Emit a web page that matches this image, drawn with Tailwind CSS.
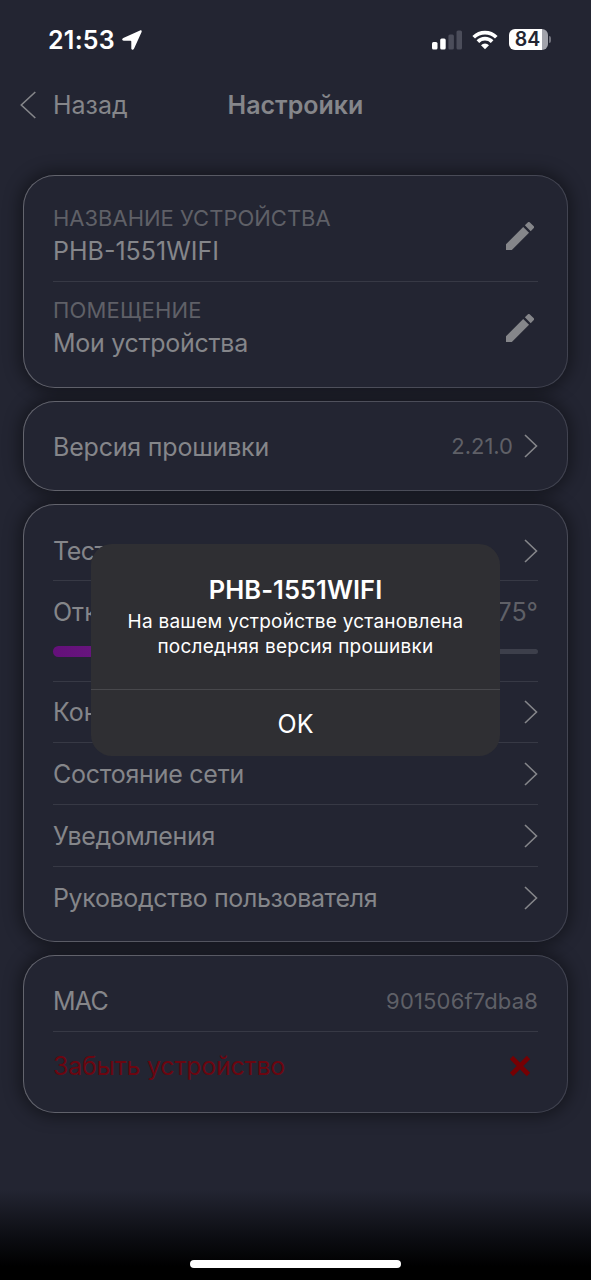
<!DOCTYPE html>
<html lang="ru">
<head>
<meta charset="utf-8">
<title>Настройки</title>
<script src="https://cdn.jsdelivr.net/npm/@tailwindcss/browser@4"></script>
</head>
<body class="bg-[#232532]">
<svg class="hidden">
  <symbol id="chev" viewBox="0 0 14 24"><path d="M1 1l11.500 11L1 23" fill="none" stroke="currentColor" stroke-width="1.600"/></symbol>
  <symbol id="pencil" viewBox="3 3 18 18"><path d="M3 17.250V21h3.750L17.810 9.940l-3.750-3.750L3 17.250zM20.710 7.040a1 1 0 0 0 0-1.410l-2.340-2.340a1 1 0 0 0-1.410 0l-1.830 1.830 3.750 3.750 1.830-1.830z" fill="currentColor"/></symbol>
</svg>
<div class="relative w-[591px] h-[1280px] overflow-hidden bg-[#232532] font-['Inter','Liberation_Sans',sans-serif] text-[25px] leading-[30px] text-[#85868a] whitespace-nowrap flex flex-col">
  <header class="h-[79px] shrink-0 flex items-center pl-12 pr-10 text-white">
    <span class="font-semibold tracking-[0.250px]">21:53</span>
    <svg class="ml-[7px] w-5 h-5" viewBox="0 0 20 20"><path d="M18 .5 1.300 7.900C-.5 8.700 0 10.700 1.700 10.700h6.800c.5 0 .8.300.8.800v6.800c0 1.700 2 2.100 2.700.4L19.600 1.900C20 .8 19.100 0 18 .5z" fill="#fff"/></svg>
    <div class="ml-auto flex items-center">
      <svg class="w-[30px] h-5" viewBox="0 0 30 20"><g fill="#fff"><rect x="0" y="12" width="5.500" height="7.500" rx="1.500"/><rect x="8.200" y="8.500" width="5.500" height="11" rx="1.500"/><g fill="#4b4d5a"><rect x="16.400" y="4.500" width="5.500" height="15" rx="1.500"/><rect x="24.500" y="0.500" width="5.500" height="19" rx="1.500"/></g></g></svg>
      <svg class="ml-[10px] w-[26px] h-5" viewBox="0 0 26 20"><g fill="none" stroke="#fff" stroke-width="3.700"><path d="M1.700 7.200a16 16 0 0 1 22.600 0"/><path d="M5.900 11.600a10 10 0 0 1 14.200 0"/></g><path d="M13 19.300l-4-4.100a5.700 5.700 0 0 1 8 0z" fill="#fff"/></svg>
      <div class="ml-[11px] w-[39px] h-[21px] rounded-[6px] bg-[linear-gradient(90deg,#fff_84%,#a2a3ab_84%)] flex items-center justify-center text-[#232532] font-semibold text-[19.500px] leading-[21px] pr-0.5">84</div>
      <div class="ml-px w-[2px] h-[7px] rounded-r bg-[#71727c]"></div>
    </div>
  </header>
  <nav class="h-[52px] shrink-0 grid grid-cols-[1fr_auto_1fr] items-center">
    <a class="flex items-center pl-5 gap-[17px]"><svg class="w-4 h-7" viewBox="0 0 16 28"><path d="M15.300 1 1.300 14l14 13" fill="none" stroke="currentColor" stroke-width="1.600"/></svg><span>Назад</span></a>
    <h1 class="font-semibold">Настройки</h1>
    <span></span>
  </nav>
  <main class="isolate pt-11 px-[23px] flex flex-col gap-[13px]">
    <section class="relative rounded-[32px] p-px bg-[linear-gradient(100deg,#64656e,#40424f)] before:absolute before:inset-0 before:-z-10 before:rounded-[32px] before:shadow-[0_0_16px_4px_rgba(0,0,0,.4)]">
      <div class="rounded-[31px] bg-[#232532] h-[211px] px-[29px] pt-[14px]">
        <div class="h-[92px] flex items-center justify-between border-b border-[#373945]">
          <div class="-mt-0.5"><p class="text-[22px] leading-[33px] text-[#5f6067]">НАЗВАНИЕ УСТРОЙСТВА</p><p class="leading-8">PHB-1551WIFI</p></div>
          <svg class="w-7 h-7 mr-1"><use href="#pencil"/></svg>
        </div>
        <div class="h-[92px] flex items-center justify-between">
          <div class="-mt-1"><p class="text-[22px] leading-[33px] text-[#5f6067] tracking-[0.180px]">ПОМЕЩЕНИЕ</p><p class="leading-8 tracking-[-0.280px]">Мои устройства</p></div>
          <svg class="w-7 h-7 mr-1"><use href="#pencil"/></svg>
        </div>
      </div>
    </section>
    <section class="relative rounded-[32px] p-px bg-[linear-gradient(93deg,#64656e,#40424f)] before:absolute before:inset-0 before:-z-10 before:rounded-[32px] before:shadow-[0_0_16px_4px_rgba(0,0,0,.4)]">
      <div class="rounded-[31px] bg-[#232532] h-[88px] px-[29px] flex items-center">
        <span class="tracking-[-0.200px] pt-px">Версия прошивки</span>
        <span class="ml-auto text-[22px] text-[#5f6067]">2.21.0</span>
        <svg class="ml-[11px] w-[14px] h-6"><use href="#chev"/></svg>
      </div>
    </section>
    <section class="relative rounded-[32px] p-px bg-[linear-gradient(110deg,#64656e,#40424f)] before:absolute before:inset-0 before:-z-10 before:rounded-[32px] before:shadow-[0_0_16px_4px_rgba(0,0,0,.4)]">
      <div class="rounded-[31px] bg-[#232532] h-[436px] px-[29px] pt-[14px]">
        <div class="h-[62px] flex items-center justify-between border-b border-[#373945]"><span class="pt-0.5 tracking-[-0.500px]">Тест</span><svg class="mt-0.5 w-[14px] h-6"><use href="#chev"/></svg></div>
        <div class="h-[101px] border-b border-[#373945] pt-4">
          <div class="flex justify-between"><span>Отк</span><span class="text-[#5f6067]">75°</span></div>
          <div class="mt-[19px] h-[11px] flex items-center"><div class="w-[300px] h-[11px] rounded-full bg-linear-to-r from-[#64107a] to-[#7a2f96]"></div><div class="flex-1 h-[5px] rounded-r-full bg-[#3d3f4b]"></div></div>
        </div>
        <div class="h-[61px] flex items-center justify-between border-b border-[#373945]"><span>Кон</span><svg class="w-[14px] h-6"><use href="#chev"/></svg></div>
        <div class="h-[62px] flex items-center justify-between border-b border-[#373945]"><span class="tracking-[-0.250px]">Состояние сети</span><svg class="w-[14px] h-6"><use href="#chev"/></svg></div>
        <div class="h-[62px] flex items-center justify-between border-b border-[#373945]"><span class="tracking-[-0.340px]">Уведомления</span><svg class="w-[14px] h-6"><use href="#chev"/></svg></div>
        <div class="h-[62px] flex items-center justify-between"><span class="tracking-[-0.360px]">Руководство пользователя</span><svg class="w-[14px] h-6"><use href="#chev"/></svg></div>
      </div>
    </section>
    <section class="relative rounded-[32px] p-px bg-[linear-gradient(97deg,#64656e,#40424f)] before:absolute before:inset-0 before:-z-10 before:rounded-[32px] before:shadow-[0_0_16px_4px_rgba(0,0,0,.4)]">
      <div class="rounded-[31px] bg-[#232532] h-[156px] px-[29px] pt-[14px]">
        <div class="h-[62px] flex items-center justify-between border-b border-[#373945]"><span class="pt-px tracking-[-0.800px]">MAC</span><span class="text-[22px] text-[#5f6067] tracking-[0.160px]">901506f7dba8</span></div>
        <div class="h-[68px] flex items-center justify-between text-[#6b0610]"><span class="tracking-[-0.240px]">Забыть устройство</span><svg class="w-[22px] h-[22px] mr-[7px]" viewBox="0 0 22 22"><path d="M2.500 2.500l17 17M19.500 2.500l-17 17" stroke="#760003" stroke-width="4.600"/></svg></div>
      </div>
    </section>
  </main>
  <footer class="mt-auto h-[90px] shrink-0 bg-[linear-gradient(180deg,#232532_0%,#0d0e14_50%,#000_85%)] flex justify-center items-end pb-3"><div class="w-[211px] h-2 rounded-full bg-white"></div></footer>
  <div role="dialog" class="absolute left-[91px] top-[544px] w-[409px] h-[212px] rounded-[21px] bg-[#2f2f33] text-white text-center flex flex-col">
    <div class="h-[146px] pt-[31px] border-b border-[#48484c]">
      <h2 class="font-semibold text-[25.500px] tracking-[0.050px]">PHB-1551WIFI</h2>
      <p class="mt-[5px] text-[19px] leading-[24.500px] tracking-[0.260px]">На вашем устройстве установлена<br>последняя версия прошивки</p>
    </div>
    <button class="flex-1 pt-px">OK</button>
  </div>
</div>
</body>
</html>
